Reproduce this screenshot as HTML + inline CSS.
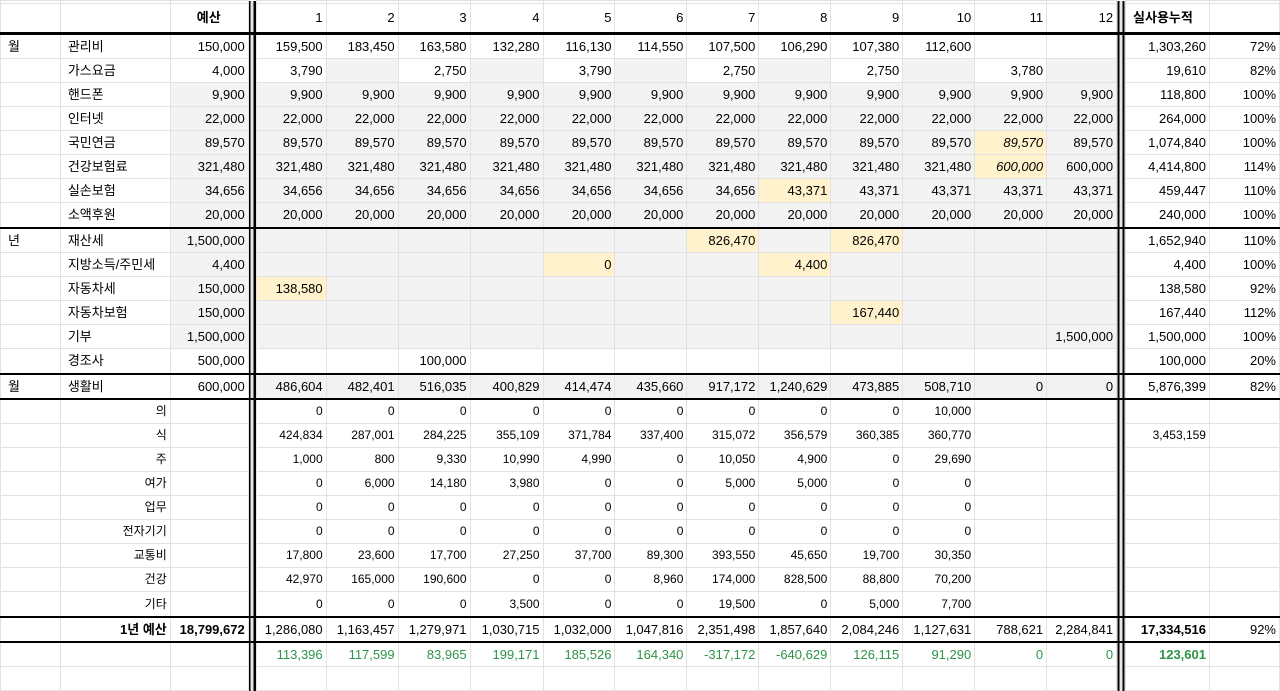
<!DOCTYPE html>
<html><head><meta charset="utf-8"><style>
html,body{margin:0;padding:0;background:#fff;width:1280px;height:667px;overflow:hidden}
table{border-collapse:collapse;table-layout:fixed;font-family:"Liberation Sans","Noto Sans CJK KR",sans-serif;font-size:13px;color:#000;position:absolute;left:0;top:0}
td{border:1px solid #e2e2e2;padding:0 3px 0 2px;text-align:right;white-space:nowrap;overflow:hidden;height:23px;line-height:23px}
td.l{text-align:left;padding-left:7px}
td.sp{padding:0;border:none;background:linear-gradient(90deg,#000 0,#000 2px,#e6e6e6 2px,#e6e6e6 5px,#000 5px,#000 7px,#fff 7px)}
.g{background:#f3f3f3}.y{background:#fff2cc}.i{font-style:italic}.b{font-weight:bold}
tr.top td{height:2px;line-height:2px}
tr.hd td{height:26px;line-height:28px;border-bottom:3px solid #000}
tr.tb td{border-bottom:2px solid #000}
tr.x td{height:24px;line-height:24px}
tr.s td{font-size:12px}
tr.gr td{color:#2e9447}
</style></head><body>
<table>
<colgroup><col style="width:60px"><col style="width:110px"><col style="width:78px"><col style="width:8px"><col style="width:70px"><col style="width:72px"><col style="width:72px"><col style="width:73px"><col style="width:72px"><col style="width:72px"><col style="width:72px"><col style="width:72px"><col style="width:72px"><col style="width:72px"><col style="width:72px"><col style="width:70px"><col style="width:9px"><col style="width:84px"><col style="width:70px"></colgroup>
<tr class="top"><td></td><td></td><td></td><td class="sp"></td><td></td><td></td><td></td><td></td><td></td><td></td><td></td><td></td><td></td><td></td><td></td><td></td><td class="sp"></td><td></td><td></td></tr>
<tr class="hd"><td></td><td></td><td class="b" style="text-align:center">예산</td><td class="sp"></td><td>1</td><td>2</td><td>3</td><td>4</td><td>5</td><td>6</td><td>7</td><td>8</td><td>9</td><td>10</td><td>11</td><td>12</td><td class="sp"></td><td class="l b">실사용누적</td><td></td></tr>
<tr><td class="l">월</td><td class="l">관리비</td><td>150,000</td><td class="sp"></td><td>159,500</td><td>183,450</td><td>163,580</td><td>132,280</td><td>116,130</td><td>114,550</td><td>107,500</td><td>106,290</td><td>107,380</td><td>112,600</td><td></td><td></td><td class="sp"></td><td>1,303,260</td><td>72%</td></tr>
<tr><td></td><td class="l">가스요금</td><td>4,000</td><td class="sp"></td><td>3,790</td><td class="g"></td><td>2,750</td><td class="g"></td><td>3,790</td><td class="g"></td><td>2,750</td><td class="g"></td><td>2,750</td><td class="g"></td><td>3,780</td><td class="g"></td><td class="sp"></td><td>19,610</td><td>82%</td></tr>
<tr><td></td><td class="l">핸드폰</td><td class="g">9,900</td><td class="sp"></td><td class="g">9,900</td><td class="g">9,900</td><td class="g">9,900</td><td class="g">9,900</td><td class="g">9,900</td><td class="g">9,900</td><td class="g">9,900</td><td class="g">9,900</td><td class="g">9,900</td><td class="g">9,900</td><td class="g">9,900</td><td class="g">9,900</td><td class="sp"></td><td>118,800</td><td>100%</td></tr>
<tr><td></td><td class="l">인터넷</td><td class="g">22,000</td><td class="sp"></td><td class="g">22,000</td><td class="g">22,000</td><td class="g">22,000</td><td class="g">22,000</td><td class="g">22,000</td><td class="g">22,000</td><td class="g">22,000</td><td class="g">22,000</td><td class="g">22,000</td><td class="g">22,000</td><td class="g">22,000</td><td class="g">22,000</td><td class="sp"></td><td>264,000</td><td>100%</td></tr>
<tr><td></td><td class="l">국민연금</td><td class="g">89,570</td><td class="sp"></td><td class="g">89,570</td><td class="g">89,570</td><td class="g">89,570</td><td class="g">89,570</td><td class="g">89,570</td><td class="g">89,570</td><td class="g">89,570</td><td class="g">89,570</td><td class="g">89,570</td><td class="g">89,570</td><td class="y i">89,570</td><td class="g">89,570</td><td class="sp"></td><td>1,074,840</td><td>100%</td></tr>
<tr><td></td><td class="l">건강보험료</td><td class="g">321,480</td><td class="sp"></td><td class="g">321,480</td><td class="g">321,480</td><td class="g">321,480</td><td class="g">321,480</td><td class="g">321,480</td><td class="g">321,480</td><td class="g">321,480</td><td class="g">321,480</td><td class="g">321,480</td><td class="g">321,480</td><td class="y i">600,000</td><td class="g">600,000</td><td class="sp"></td><td>4,414,800</td><td>114%</td></tr>
<tr><td></td><td class="l">실손보험</td><td class="g">34,656</td><td class="sp"></td><td class="g">34,656</td><td class="g">34,656</td><td class="g">34,656</td><td class="g">34,656</td><td class="g">34,656</td><td class="g">34,656</td><td class="g">34,656</td><td class="y">43,371</td><td class="g">43,371</td><td class="g">43,371</td><td class="g">43,371</td><td class="g">43,371</td><td class="sp"></td><td>459,447</td><td>110%</td></tr>
<tr class="tb x"><td></td><td class="l">소액후원</td><td class="g">20,000</td><td class="sp"></td><td class="g">20,000</td><td class="g">20,000</td><td class="g">20,000</td><td class="g">20,000</td><td class="g">20,000</td><td class="g">20,000</td><td class="g">20,000</td><td class="g">20,000</td><td class="g">20,000</td><td class="g">20,000</td><td class="g">20,000</td><td class="g">20,000</td><td class="sp"></td><td>240,000</td><td>100%</td></tr>
<tr><td class="l">년</td><td class="l">재산세</td><td class="g">1,500,000</td><td class="sp"></td><td class="g"></td><td class="g"></td><td class="g"></td><td class="g"></td><td class="g"></td><td class="g"></td><td class="y">826,470</td><td class="g"></td><td class="y">826,470</td><td class="g"></td><td class="g"></td><td class="g"></td><td class="sp"></td><td>1,652,940</td><td>110%</td></tr>
<tr><td></td><td class="l">지방소득/주민세</td><td class="g">4,400</td><td class="sp"></td><td class="g"></td><td class="g"></td><td class="g"></td><td class="g"></td><td class="y">0</td><td class="g"></td><td class="g"></td><td class="y">4,400</td><td class="g"></td><td class="g"></td><td class="g"></td><td class="g"></td><td class="sp"></td><td>4,400</td><td>100%</td></tr>
<tr><td></td><td class="l">자동차세</td><td class="g">150,000</td><td class="sp"></td><td class="y">138,580</td><td class="g"></td><td class="g"></td><td class="g"></td><td class="g"></td><td class="g"></td><td class="g"></td><td class="g"></td><td class="g"></td><td class="g"></td><td class="g"></td><td class="g"></td><td class="sp"></td><td>138,580</td><td>92%</td></tr>
<tr><td></td><td class="l">자동차보험</td><td class="g">150,000</td><td class="sp"></td><td class="g"></td><td class="g"></td><td class="g"></td><td class="g"></td><td class="g"></td><td class="g"></td><td class="g"></td><td class="g"></td><td class="y">167,440</td><td class="g"></td><td class="g"></td><td class="g"></td><td class="sp"></td><td>167,440</td><td>112%</td></tr>
<tr><td></td><td class="l">기부</td><td class="g">1,500,000</td><td class="sp"></td><td class="g"></td><td class="g"></td><td class="g"></td><td class="g"></td><td class="g"></td><td class="g"></td><td class="g"></td><td class="g"></td><td class="g"></td><td class="g"></td><td class="g"></td><td class="g">1,500,000</td><td class="sp"></td><td>1,500,000</td><td>100%</td></tr>
<tr class="tb x"><td></td><td class="l">경조사</td><td>500,000</td><td class="sp"></td><td></td><td></td><td>100,000</td><td></td><td></td><td></td><td></td><td></td><td></td><td></td><td></td><td></td><td class="sp"></td><td>100,000</td><td>20%</td></tr>
<tr class="tb"><td class="l">월</td><td class="l">생활비</td><td>600,000</td><td class="sp"></td><td class="g">486,604</td><td class="g">482,401</td><td class="g">516,035</td><td class="g">400,829</td><td class="g">414,474</td><td class="g">435,660</td><td class="g">917,172</td><td class="g">1,240,629</td><td class="g">473,885</td><td class="g">508,710</td><td class="g">0</td><td class="g">0</td><td class="sp"></td><td>5,876,399</td><td>82%</td></tr>
<tr class="s"><td></td><td>의</td><td></td><td class="sp"></td><td>0</td><td>0</td><td>0</td><td>0</td><td>0</td><td>0</td><td>0</td><td>0</td><td>0</td><td>10,000</td><td></td><td></td><td class="sp"></td><td></td><td></td></tr>
<tr class="s"><td></td><td>식</td><td></td><td class="sp"></td><td>424,834</td><td>287,001</td><td>284,225</td><td>355,109</td><td>371,784</td><td>337,400</td><td>315,072</td><td>356,579</td><td>360,385</td><td>360,770</td><td></td><td></td><td class="sp"></td><td>3,453,159</td><td></td></tr>
<tr class="s"><td></td><td>주</td><td></td><td class="sp"></td><td>1,000</td><td>800</td><td>9,330</td><td>10,990</td><td>4,990</td><td>0</td><td>10,050</td><td>4,900</td><td>0</td><td>29,690</td><td></td><td></td><td class="sp"></td><td></td><td></td></tr>
<tr class="s"><td></td><td>여가</td><td></td><td class="sp"></td><td>0</td><td>6,000</td><td>14,180</td><td>3,980</td><td>0</td><td>0</td><td>5,000</td><td>5,000</td><td>0</td><td>0</td><td></td><td></td><td class="sp"></td><td></td><td></td></tr>
<tr class="s"><td></td><td>업무</td><td></td><td class="sp"></td><td>0</td><td>0</td><td>0</td><td>0</td><td>0</td><td>0</td><td>0</td><td>0</td><td>0</td><td>0</td><td></td><td></td><td class="sp"></td><td></td><td></td></tr>
<tr class="s"><td></td><td>전자기기</td><td></td><td class="sp"></td><td>0</td><td>0</td><td>0</td><td>0</td><td>0</td><td>0</td><td>0</td><td>0</td><td>0</td><td>0</td><td></td><td></td><td class="sp"></td><td></td><td></td></tr>
<tr class="s"><td></td><td>교통비</td><td></td><td class="sp"></td><td>17,800</td><td>23,600</td><td>17,700</td><td>27,250</td><td>37,700</td><td>89,300</td><td>393,550</td><td>45,650</td><td>19,700</td><td>30,350</td><td></td><td></td><td class="sp"></td><td></td><td></td></tr>
<tr class="s"><td></td><td>건강</td><td></td><td class="sp"></td><td>42,970</td><td>165,000</td><td>190,600</td><td>0</td><td>0</td><td>8,960</td><td>174,000</td><td>828,500</td><td>88,800</td><td>70,200</td><td></td><td></td><td class="sp"></td><td></td><td></td></tr>
<tr class="s tb x"><td></td><td>기타</td><td></td><td class="sp"></td><td>0</td><td>0</td><td>0</td><td>3,500</td><td>0</td><td>0</td><td>19,500</td><td>0</td><td>5,000</td><td>7,700</td><td></td><td></td><td class="sp"></td><td></td><td></td></tr>
<tr class="tb"><td></td><td class="b">1년 예산</td><td class="b">18,799,672</td><td class="sp"></td><td>1,286,080</td><td>1,163,457</td><td>1,279,971</td><td>1,030,715</td><td>1,032,000</td><td>1,047,816</td><td>2,351,498</td><td>1,857,640</td><td>2,084,246</td><td>1,127,631</td><td>788,621</td><td>2,284,841</td><td class="sp"></td><td class="b">17,334,516</td><td>92%</td></tr>
<tr class="gr"><td></td><td></td><td></td><td class="sp"></td><td>113,396</td><td>117,599</td><td>83,965</td><td>199,171</td><td>185,526</td><td>164,340</td><td>-317,172</td><td>-640,629</td><td>126,115</td><td>91,290</td><td>0</td><td>0</td><td class="sp"></td><td class="b">123,601</td><td></td></tr>
<tr><td></td><td></td><td></td><td class="sp"></td><td></td><td></td><td></td><td></td><td></td><td></td><td></td><td></td><td></td><td></td><td></td><td></td><td class="sp"></td><td></td><td></td></tr>
</table>
</body></html>
